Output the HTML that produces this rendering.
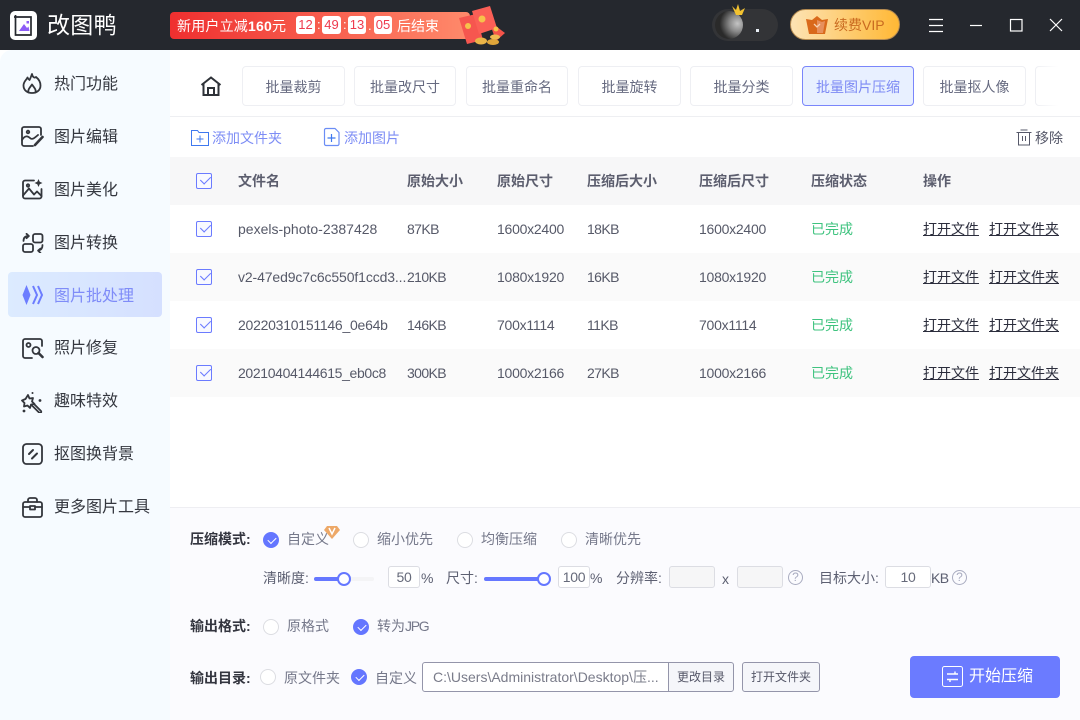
<!DOCTYPE html>
<html lang="zh"><head><meta charset="utf-8"><title>改图鸭</title>
<style>
*{box-sizing:border-box;margin:0;padding:0}
html,body{width:1080px;height:720px;overflow:hidden;background:#fff}
body{position:relative;font-family:"Liberation Sans","Noto Sans CJK SC",sans-serif;font-size:14px;color:#55586b}
.a,.t,svg.i{position:absolute}
.t{line-height:20px;height:20px;white-space:nowrap}
.n{font-size:16px;color:#34373f;left:54px;line-height:22px;height:22px}
.tab{position:absolute;top:66px;height:40px;border:1px solid #eeeff3;border-radius:4px;background:#fff;text-align:center;line-height:40px;font-size:14px;color:#666a80}
.h{font-weight:700;font-size:14px;color:#5c5e6e}
.c{font-size:14px;color:#565968;letter-spacing:-.25px}
.k{letter-spacing:-.6px}
.g{font-size:14px;color:#3fc37f}
.l{font-size:14px;color:#2b2d3c;text-decoration:underline}
.cb{position:absolute;left:196px;width:16px;height:16px;border:1px solid #6b7bff;border-radius:2px;background:#f8f9ff}
.cb:after{content:"";position:absolute;left:4px;top:2px;width:8px;height:5px;border-left:1px solid #6b7bff;border-bottom:1px solid #6b7bff;transform:rotate(-45deg) scaleX(1.1)}
.r{position:absolute;width:16px;height:16px;border-radius:50%;background:#fff;border:1px solid #dcdde2}
.r.on{background:#6476ff;border-color:#6476ff}
.r.on:after{content:"";position:absolute;left:4px;top:3.5px;width:7px;height:4px;border-left:1.3px solid #fff;border-bottom:1.3px solid #fff;transform:rotate(-45deg)}
.lb{font-size:14px;font-weight:700;color:#33353f}
.o{font-size:14px;color:#75788a}
.s{font-size:14px;color:#5d6072}
.in{position:absolute;top:566px;height:22px;border:1px solid #dcdde3;border-radius:3px;background:#fff;text-align:center;font-size:14px;line-height:21px;color:#666a7a;letter-spacing:-.25px}
.dis{background:#f6f6f7}
.q{position:absolute;top:570px;width:15px;height:15px;border:1px solid #a9acc0;border-radius:50%;text-align:center;font-size:12px;line-height:13px;color:#a9acc0}
.bt{position:absolute;top:662px;height:30px;border:1px solid #9495aa;background:#f5f6fa;font-size:12px;line-height:28px;text-align:center;color:#565869}
.tm{position:absolute;top:16px;height:18px;border-radius:3px;background:#fff;color:#ee3a4d;text-align:center;font-size:13px;line-height:18px}
svg.ic{position:absolute;fill:none;stroke:#33363c;stroke-width:1.8;stroke-linejoin:round;stroke-linecap:round}
</style></head><body>

<div class="a" style="left:0;top:0;width:1080px;height:50px;background:#25282e"></div>
<div class="a" style="left:10px;top:11px;width:27px;height:29px;background:#fff;border-radius:5px"></div>
<svg class="i" style="left:10px;top:11px" width="27" height="29" viewBox="0 0 27 29"><path d="M4 6H21V24H5.500V4" fill="none" stroke="#25282e" stroke-width="1.700"/><path d="M9 20l5-7 3 4 1.500-1.500 1 4.500z" fill="#8d5cf6"/><rect x="16.500" y="10" width="2.500" height="2.500" fill="#8d5cf6"/></svg>
<div class="t" style="left:47px;top:11px;font-size:23px;line-height:28px;height:28px;color:#fff;letter-spacing:.3px">改图鸭</div>

<div class="a" style="left:170px;top:12px;width:300px;height:27px;border-radius:4px;background:linear-gradient(90deg,#ef2f2f,#ff8a6b)"></div>
<div class="t" style="left:177px;top:16px;font-size:14px;color:#fff;letter-spacing:.2px">新用户立减<b>160</b>元</div>
<div class="tm" style="left:296px;width:19px">12</div>
<div class="tm" style="left:322px;width:19px">49</div>
<div class="tm" style="left:348px;width:18px">13</div>
<div class="tm" style="left:374px;width:18px">05</div>
<div class="t" style="left:317px;top:15px;color:#fff;font-size:13px">:</div>
<div class="t" style="left:343px;top:15px;color:#fff;font-size:13px">:</div>
<div class="t" style="left:368px;top:16px;color:#fff;font-size:13px">.</div>
<div class="t" style="left:397px;top:16px;font-size:14px;color:#fff">后结束</div>
<svg class="i" style="left:457px;top:5px" width="50" height="44" viewBox="0 0 50 44"><path d="M32 16l16 12-9 8z" fill="#f4544a"/><path d="M2 13l17-4 7 26-16 4z" fill="#f6564f"/><path d="M15 6l18-5 7 22-18 6z" fill="#fb5f56"/><circle cx="11" cy="21" r="3" fill="#f7c14b"/><circle cx="25" cy="14" r="3.500" fill="#f7c14b"/><circle cx="39" cy="24" r="2.500" fill="#f7c14b"/><ellipse cx="24" cy="36" rx="6" ry="3.500" fill="#eab448"/><ellipse cx="36" cy="37" rx="6" ry="3" fill="#dfa53a"/><ellipse cx="38" cy="32" rx="5" ry="2.500" fill="#f0bb52"/></svg>

<div class="a" style="left:712px;top:9px;width:66px;height:32px;border-radius:16px;background:#333437"></div>
<div class="a" style="left:715px;top:11px;width:28px;height:28px;border-radius:50%;background:radial-gradient(circle at 80% 45%,#c4c4c4 0,#888 30%,#2a2a2a 65%)"></div>
<svg class="i" style="left:731px;top:3px" width="16" height="14" viewBox="0 0 16 14"><path d="M1 3l4 4 2-6 2 7 5-3-3 7H5z" fill="#f2c230"/></svg>
<div class="a" style="left:756px;top:29px;width:3px;height:3px;background:#e8eef5"></div>
<div class="a" style="left:790px;top:9px;width:110px;height:31px;border-radius:15.500px;background:linear-gradient(90deg,#fde3b4,#ffb835);border:1px solid #b48a50"></div>
<svg class="i" style="left:805px;top:15px" width="24" height="20" viewBox="0 0 24 20"><path d="M1 4l6 1 5-4 5 4 6-1-3 15H4z" fill="#d9691b"/><path d="M12 5l5 2 3-1-2 12H12z" fill="#e7905c"/><path d="M9 9l3 3 3-3" fill="none" stroke="#f7d3b3" stroke-width="1.300"/></svg>
<div class="t" style="left:834px;top:15px;font-size:14px;color:#c96a20">续费VIP</div>
<svg class="i" style="left:925px;top:15px" width="145" height="20" viewBox="0 0 145 20" fill="none" stroke="#fff" stroke-width="1.200"><path d="M4 4.500H18M4 10.500H18M4 16.500H18"/><path d="M45 10.500H57"/><rect x="85.500" y="4.500" width="11.500" height="11.500"/><path d="M125 4l12 12M137 4l-12 12"/></svg>

<div class="a" style="left:0;top:50px;width:170px;height:670px;background:#f6fbff;border-top-left-radius:12px"></div>
<div class="a" style="left:8px;top:272px;width:154px;height:45px;border-radius:4px;background:linear-gradient(90deg,#dcebff,#d5e0ff)"></div>

<svg class="ic" style="left:22px;top:73px" width="20" height="21" viewBox="0 0 20 21"><path d="M10 1c.5 3 2.500 4.500 4 3 2.500 2 4.500 5 4.500 8.500 0 4.500-3.500 7.500-8.500 7.500S1.500 17 1.500 12.500c0-4 3-5.500 4-8 .5 1 1 2 2 2.500C8.500 5.500 9 3.500 10 1z"/><path d="M6.500 19.500c-1-3 1.500-5 3.500-8 2 3 4.500 5 3.500 8"/></svg>
<svg class="ic" style="left:21px;top:126px" width="23" height="21" viewBox="0 0 23 21"><path d="M20 9V3a2 2 0 0 0-2-2H3a2 2 0 0 0-2 2v15a2 2 0 0 0 2 2h9"/><path d="M1 14c3-5 6-4 8-2s4 .5 8-3"/><circle cx="7" cy="6" r="1.300"/><path d="M21.500 11L14 19" stroke-width="2.600"/></svg>
<svg class="ic" style="left:22px;top:179px" width="21" height="21" viewBox="0 0 21 21"><path d="M12 1.500H3a2 2 0 0 0-2 2v14a2 2 0 0 0 2 2h14.500a2 2 0 0 0 2-2V10"/><path d="M1 16.500l6-7 5 6 3-3 4.500 4.500"/><path d="M16.500 0l1.200 2.800 2.800 1.200-2.800 1.200-1.200 2.800-1.200-2.800L12.500 4l2.800-1.200z" fill="#33363c" stroke="none"/><circle cx="6" cy="6.500" r="1.200"/></svg>
<svg class="ic" style="left:22px;top:233px" width="22" height="20" viewBox="0 0 22 20"><rect x="11" y="1" width="9.500" height="8.500" rx="2"/><rect x="1" y="11" width="10" height="8" rx="2"/><path d="M1.500 8c0-3.500 2-5 5-5M4.500 0.800l2.400 2.200-2.400 2.200M20.500 12c0 3.500-1.500 5-4 5.500M18.500 20l-2.400-2.400 2.400-2"/></svg>
<svg class="i" style="left:22px;top:284px" width="22" height="22" viewBox="0 0 22 22"><path d="M4.500 1l4 10-4 10-4-10z" fill="#6c7dff"/><path d="M11 2l4 9-4 9M16 2l4 9-4 9" fill="none" stroke="#6c7dff" stroke-width="2"/></svg>
<svg class="ic" style="left:22px;top:338px" width="22" height="21" viewBox="0 0 22 21"><path d="M20 8V3a2 2 0 0 0-2-2H3a2 2 0 0 0-2 2v15a2 2 0 0 0 2 2h7"/><circle cx="6.500" cy="7" r="2"/><circle cx="14" cy="12.500" r="3.500"/><path d="M16.500 15l4 4" stroke-width="2.600"/></svg>
<svg class="ic" style="left:21px;top:391px" width="22" height="22" viewBox="0 0 22 22"><path d="M7 4l1.500 3.500 3.500-.5-1 3.500 2.500 2.500-3.500.5-1 3.500-2.500-2.500-3.500 1 .5-3.500L1 9.500 4.500 8z"/><path d="M13 13l7 7c.8 1.500-.8 2.500-2 1.500l-7-7"/><circle cx="11.500" cy="2" r="1" fill="#33363c" stroke="none"/><circle cx="19" cy="9.500" r="1.400" fill="#33363c" stroke="none"/><circle cx="3" cy="20" r="1.400" fill="#33363c" stroke="none"/></svg>
<svg class="ic" style="left:22px;top:443px" width="21" height="22" viewBox="0 0 21 22"><rect x="1" y="1" width="19" height="20" rx="3.500"/><path d="M7 11l4-4M10 15.500l5-5" stroke-width="2"/></svg>
<svg class="ic" style="left:22px;top:497px" width="21" height="21" viewBox="0 0 21 21"><rect x="1" y="5" width="19" height="15" rx="2"/><path d="M6 5V3a2 2 0 0 1 2-2h5a2 2 0 0 1 2 2v2M1 10h6M14 10h6M8 9h5v3.500H8z"/></svg>

<div class="t n" style="top:74px">热门功能</div>
<div class="t n" style="top:127px">图片编辑</div>
<div class="t n" style="top:180px">图片美化</div>
<div class="t n" style="top:233px">图片转换</div>
<div class="t n" style="top:286px;color:#7f8cf8">图片批处理</div>
<div class="t n" style="top:338px">照片修复</div>
<div class="t n" style="top:391px">趣味特效</div>
<div class="t n" style="top:444px">抠图换背景</div>
<div class="t n" style="top:497px">更多图片工具</div>

<svg class="i" style="left:200px;top:76px" width="22" height="21" viewBox="0 0 22 21" fill="none" stroke="#2e3238" stroke-width="2"><path d="M1.500 9L11 1.500 20.500 9M3.500 7.500V19h15V7.500M8 19v-7h6v7"/></svg>
<div class="tab" style="left:242px;width:103px">批量裁剪</div>
<div class="tab" style="left:354px;width:102px">批量改尺寸</div>
<div class="tab" style="left:466px;width:102px">批量重命名</div>
<div class="tab" style="left:578px;width:103px">批量旋转</div>
<div class="tab" style="left:690px;width:103px">批量分类</div>
<div class="tab" style="left:802px;width:112px;background:#e8f0ff;border-color:#7a86fb;color:#7d8af4">批量图片压缩</div>
<div class="tab" style="left:923px;width:103px">批量抠人像</div>
<div class="tab" style="left:1035px;width:70px"></div>
<div class="a" style="left:1036px;top:60px;width:44px;height:50px;background:linear-gradient(90deg,rgba(255,255,255,0),#fff 50%)"></div>
<div class="a" style="left:170px;top:116px;width:910px;height:1px;background:#eeeff2"></div>

<svg class="i" style="left:190px;top:129px" width="20" height="18" viewBox="0 0 20 18" fill="none" stroke="#3f79ef" stroke-width="1"><path d="M1.500 1.500h6l1.500 2h9.500v13h-17zM10 6.500v7M6.500 10h7"/></svg>
<div class="t" style="left:212px;top:128px;font-size:14px;color:#7d8df5">添加文件夹</div>
<svg class="i" style="left:323px;top:127px" width="18" height="20" viewBox="0 0 18 20" fill="none" stroke="#6b8df5" stroke-width="1.200"><path d="M3 1.500h9l4 4v11.500a1.500 1.500 0 0 1-1.500 1.500h-11.500a1.500 1.500 0 0 1-1.500-1.500V3a1.500 1.500 0 0 1 1.500-1.500z"/><path d="M8.500 7v8M4.500 11h8" stroke="#3f79ef"/></svg>
<div class="t" style="left:344px;top:128px;font-size:14px;color:#7d8df5">添加图片</div>
<svg class="i" style="left:1016px;top:129px" width="16" height="17" viewBox="0 0 16 17" fill="none" stroke="#565869" stroke-width="1"><path d="M.5 3.500h15M4.500 1h7M2.500 3.500v12.500h11V3.500M6.500 7v5M9.500 7v5"/></svg>
<div class="t" style="left:1035px;top:128px;font-size:14px;color:#565869">移除</div>

<div class="a" style="left:170px;top:157px;width:910px;height:48px;background:#f7f7f8"></div>
<div class="a" style="left:170px;top:253px;width:910px;height:48px;background:#fafafa"></div>
<div class="a" style="left:170px;top:349px;width:910px;height:48px;background:#fafafa"></div>
<div class="cb" style="top:173px"></div><div class="cb" style="top:221px"></div><div class="cb" style="top:269px"></div><div class="cb" style="top:317px"></div><div class="cb" style="top:365px"></div>

<div class="t h" style="left:238px;top:171px">文件名</div><div class="t h" style="left:407px;top:171px">原始大小</div><div class="t h" style="left:497px;top:171px">原始尺寸</div><div class="t h" style="left:587px;top:171px">压缩后大小</div><div class="t h" style="left:699px;top:171px">压缩后尺寸</div><div class="t h" style="left:811px;top:171px">压缩状态</div><div class="t h" style="left:923px;top:171px">操作</div>

<div class="t c" style="left:238px;top:219px;letter-spacing:0">pexels-photo-2387428</div><div class="t c k" style="left:407px;top:219px">87KB</div><div class="t c" style="left:497px;top:219px">1600x2400</div><div class="t c k" style="left:587px;top:219px">18KB</div><div class="t c" style="left:699px;top:219px">1600x2400</div><div class="t g" style="left:811px;top:219px">已完成</div><div class="t l" style="left:923px;top:219px">打开文件</div><div class="t l" style="left:989px;top:219px">打开文件夹</div>
<div class="t c" style="left:238px;top:267px;letter-spacing:-.12px">v2-47ed9c7c6c550f1ccd3...</div><div class="t c k" style="left:407px;top:267px">210KB</div><div class="t c" style="left:497px;top:267px">1080x1920</div><div class="t c k" style="left:587px;top:267px">16KB</div><div class="t c" style="left:699px;top:267px">1080x1920</div><div class="t g" style="left:811px;top:267px">已完成</div><div class="t l" style="left:923px;top:267px">打开文件</div><div class="t l" style="left:989px;top:267px">打开文件夹</div>
<div class="t c" style="left:238px;top:315px">20220310151146_0e64b</div><div class="t c k" style="left:407px;top:315px">146KB</div><div class="t c" style="left:497px;top:315px">700x1114</div><div class="t c k" style="left:587px;top:315px">11KB</div><div class="t c" style="left:699px;top:315px">700x1114</div><div class="t g" style="left:811px;top:315px">已完成</div><div class="t l" style="left:923px;top:315px">打开文件</div><div class="t l" style="left:989px;top:315px">打开文件夹</div>
<div class="t c" style="left:238px;top:363px;letter-spacing:-.35px">20210404144615_eb0c8</div><div class="t c k" style="left:407px;top:363px">300KB</div><div class="t c" style="left:497px;top:363px">1000x2166</div><div class="t c k" style="left:587px;top:363px">27KB</div><div class="t c" style="left:699px;top:363px">1000x2166</div><div class="t g" style="left:811px;top:363px">已完成</div><div class="t l" style="left:923px;top:363px">打开文件</div><div class="t l" style="left:989px;top:363px">打开文件夹</div>

<div class="a" style="left:170px;top:507px;width:910px;height:213px;background:#fbfbfe;border-top:1px solid #eeeef2"></div>
<div class="t lb" style="left:190px;top:529px">压缩模式:</div>
<div class="r on" style="left:263px;top:532px"></div><div class="t o" style="left:287px;top:529px">自定义</div>
<svg class="i" style="left:323px;top:525px" width="18" height="16" viewBox="0 0 18 16"><path d="M4 1h10l3 4-8 9-8-9z" fill="#eda868"/><path d="M6 3l3 6 3-6" fill="none" stroke="#fff" stroke-width="1.500"/></svg>
<div class="r" style="left:353px;top:532px"></div><div class="t o" style="left:377px;top:529px">缩小优先</div>
<div class="r" style="left:457px;top:532px"></div><div class="t o" style="left:481px;top:529px">均衡压缩</div>
<div class="r" style="left:561px;top:532px"></div><div class="t o" style="left:585px;top:529px">清晰优先</div>

<div class="t s" style="left:263px;top:568px">清晰度:</div>
<div class="a" style="left:314px;top:577px;width:60px;height:4px;border-radius:2px;background:#f4f4f6"></div>
<div class="a" style="left:314px;top:577px;width:30px;height:4px;border-radius:2px;background:#6577ff"></div>
<div class="a" style="left:337px;top:572px;width:14px;height:14px;border-radius:50%;background:#fff;border:2px solid #6577ff"></div>
<div class="in" style="left:388px;width:32px">50</div><div class="t s" style="left:421px;top:568px">%</div>
<div class="t s" style="left:446px;top:568px">尺寸:</div>
<div class="a" style="left:484px;top:577px;width:60px;height:4px;border-radius:2px;background:#6577ff"></div>
<div class="a" style="left:537px;top:572px;width:14px;height:14px;border-radius:50%;background:#fff;border:2px solid #6577ff"></div>
<div class="in" style="left:558px;width:32px">100</div><div class="t s" style="left:590px;top:568px">%</div>
<div class="t s" style="left:616px;top:568px">分辨率:</div>
<div class="in dis" style="left:669px;width:46px"></div><div class="t s" style="left:722px;top:569px">x</div>
<div class="in dis" style="left:737px;width:46px"></div><div class="q" style="left:788px">?</div>
<div class="t s" style="left:819px;top:568px">目标大小:</div>
<div class="in" style="left:885px;width:46px">10</div><div class="t s" style="left:931px;top:568px;letter-spacing:-.6px">KB</div><div class="q" style="left:952px">?</div>

<div class="t lb" style="left:190px;top:616px">输出格式:</div>
<div class="r" style="left:263px;top:619px"></div><div class="t o" style="left:287px;top:616px">原格式</div>
<div class="r on" style="left:353px;top:619px"></div><div class="t o" style="left:377px;top:616px">转为<span style="letter-spacing:-1.300px">JPG</span></div>

<div class="t lb" style="left:190px;top:668px">输出目录:</div>
<div class="r" style="left:260px;top:669px"></div><div class="t o" style="left:284px;top:668px">原文件夹</div>
<div class="r on" style="left:351px;top:669px"></div><div class="t o" style="left:375px;top:668px">自定义</div>
<div class="a" style="left:422px;top:662px;width:247px;height:30px;border:1px solid #9495aa;border-radius:3px 0 0 3px;background:#fff;font-size:14px;line-height:28px;padding-left:10px;color:#7a7c8a;white-space:nowrap;overflow:hidden">C:\Users\Administrator\Desktop\压...</div>
<div class="bt" style="left:668px;width:66px;border-radius:0 3px 3px 0">更改目录</div>
<div class="bt" style="left:742px;width:78px;border-radius:3px">打开文件夹</div>
<div class="a" style="left:910px;top:656px;width:150px;height:42px;border-radius:4px;background:#6b7bff"></div>
<svg class="i" style="left:942px;top:666px" width="22" height="22" viewBox="0 0 22 22" fill="none" stroke="#fff" stroke-width="1"><rect x=".5" y=".5" width="20" height="20" rx="2"/><path d="M5 8h11M13 5.500v2.500M5 13.500h11M8 13.500v2.500" stroke-width="1.400"/></svg>
<div class="t" style="left:969px;top:667px;font-size:16px;color:#fff">开始压缩</div>
</body></html>
